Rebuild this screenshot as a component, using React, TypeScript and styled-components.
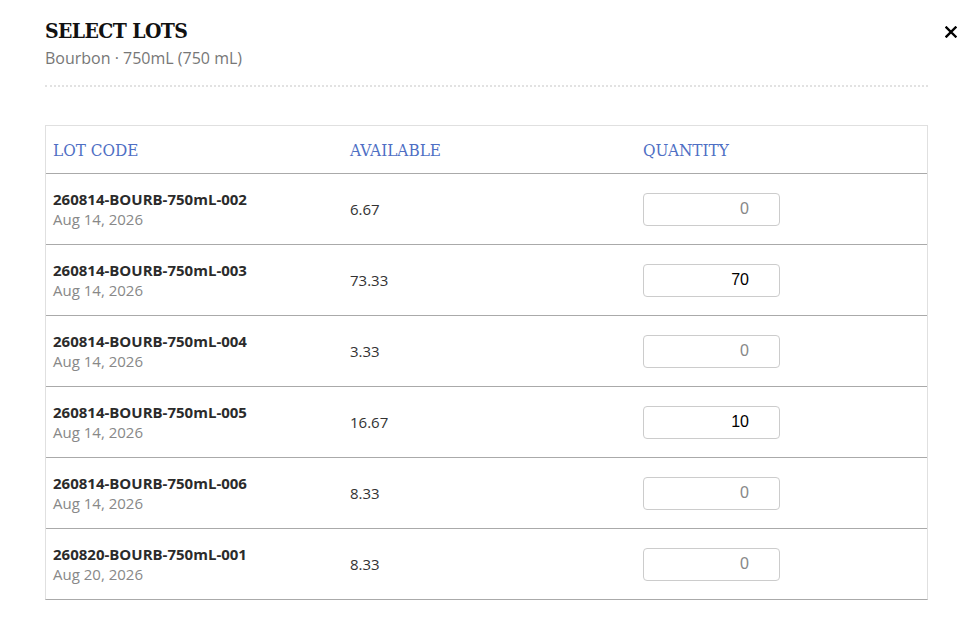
import React from "react";
import styled, { createGlobalStyle } from "styled-components";

const Global = createGlobalStyle`
  html, body { margin: 0; padding: 0; background: #fff; }
  body { font-family: "Open Sans", "Liberation Sans", sans-serif; color: #333; }
  * { box-sizing: border-box; }
`;

const Modal = styled.div`
  position: relative;
  width: 974px;
  padding: 17px 46px 0 45px;
`;

const Head = styled.div`
  padding-bottom: 16px;
  border-bottom: 2px dotted #e2e2e2;
`;

const Title = styled.h2`
  margin: 0;
  font-family: "DejaVu Serif Condensed", "DejaVu Serif", serif;
  font-weight: 700;
  font-size: 21px;
  line-height: 27px;
  letter-spacing: -0.6px;
  color: #111;
`;

const Subtitle = styled.div`
  font-size: 16px;
  line-height: 22px;
  color: #777;
  margin-top: 3px;
`;

const Close = styled.button`
  position: absolute;
  top: 22px;
  right: 13px;
  width: 20px;
  height: 20px;
  padding: 0;
  border: none;
  background: transparent;
  display: flex;
  align-items: center;
  justify-content: center;
  cursor: pointer;
`;

const Table = styled.div`
  margin-top: 38px;
  border: 1px solid #e0e0e0;
  border-bottom: 1px solid #aaa;
`;

const Row = styled.div<{ $header?: boolean }>`
  display: grid;
  grid-template-columns: 297px 293px 1fr;
  height: ${(p) => (p.$header ? "47px" : "71px")};
  align-items: center;
  border-top: ${(p) => (p.$header ? "none" : "1px solid #aaa")};
`;

const Th = styled.div`
  padding-left: 7px;
  font-family: "DejaVu Serif Condensed", "DejaVu Serif", serif;
  font-size: 17px;
  color: #4f6fc4;
  padding-top: 1px;
`;

const Cell = styled.div`
  padding-left: 7px;
  font-size: 15px;
`;

const Code = styled.div`
  font-weight: 700;
  font-size: 15px;
  line-height: 20px;
  color: #2b2b2b;
`;

const DateText = styled.div`
  font-size: 15px;
  line-height: 20px;
  color: #888;
`;

const Qty = styled.input`
  width: 137px;
  height: 33px;
  border: 1px solid #ccc;
  border-radius: 4px;
  padding: 0 30px 0 8px;
  text-align: right;
  font-family: "Liberation Sans", Arial, sans-serif;
  font-size: 16px;
  color: #000;
  background: #fff;
  outline: none;
  &::placeholder { color: #888; }
`;

const lots = [
  { code: "260814-BOURB-750mL-002", date: "Aug 14, 2026", avail: "6.67", qty: "" },
  { code: "260814-BOURB-750mL-003", date: "Aug 14, 2026", avail: "73.33", qty: "70" },
  { code: "260814-BOURB-750mL-004", date: "Aug 14, 2026", avail: "3.33", qty: "" },
  { code: "260814-BOURB-750mL-005", date: "Aug 14, 2026", avail: "16.67", qty: "10" },
  { code: "260814-BOURB-750mL-006", date: "Aug 14, 2026", avail: "8.33", qty: "" },
  { code: "260820-BOURB-750mL-001", date: "Aug 20, 2026", avail: "8.33", qty: "" },
];

export default function App() {
  return (
    <>
      <Global />
      <Modal>
        <Head>
          <Title>SELECT LOTS</Title>
          <Subtitle>Bourbon · 750mL (750 mL)</Subtitle>
        </Head>
        <Close aria-label="Close">
          <svg width="12" height="12" viewBox="0 0 12 12">
            <path d="M1.5 1.5 L10.5 10.5 M10.5 1.5 L1.5 10.5" stroke="#000" strokeWidth="2.4" strokeLinecap="square" />
          </svg>
        </Close>
        <Table>
          <Row $header>
            <Th>LOT CODE</Th>
            <Th>AVAILABLE</Th>
            <Th>QUANTITY</Th>
          </Row>
          {lots.map((l) => (
            <Row key={l.code}>
              <Cell>
                <Code>{l.code}</Code>
                <DateText>{l.date}</DateText>
              </Cell>
              <Cell>{l.avail}</Cell>
              <Cell>
                <Qty defaultValue={l.qty} placeholder="0" />
              </Cell>
            </Row>
          ))}
        </Table>
      </Modal>
    </>
  );
}
